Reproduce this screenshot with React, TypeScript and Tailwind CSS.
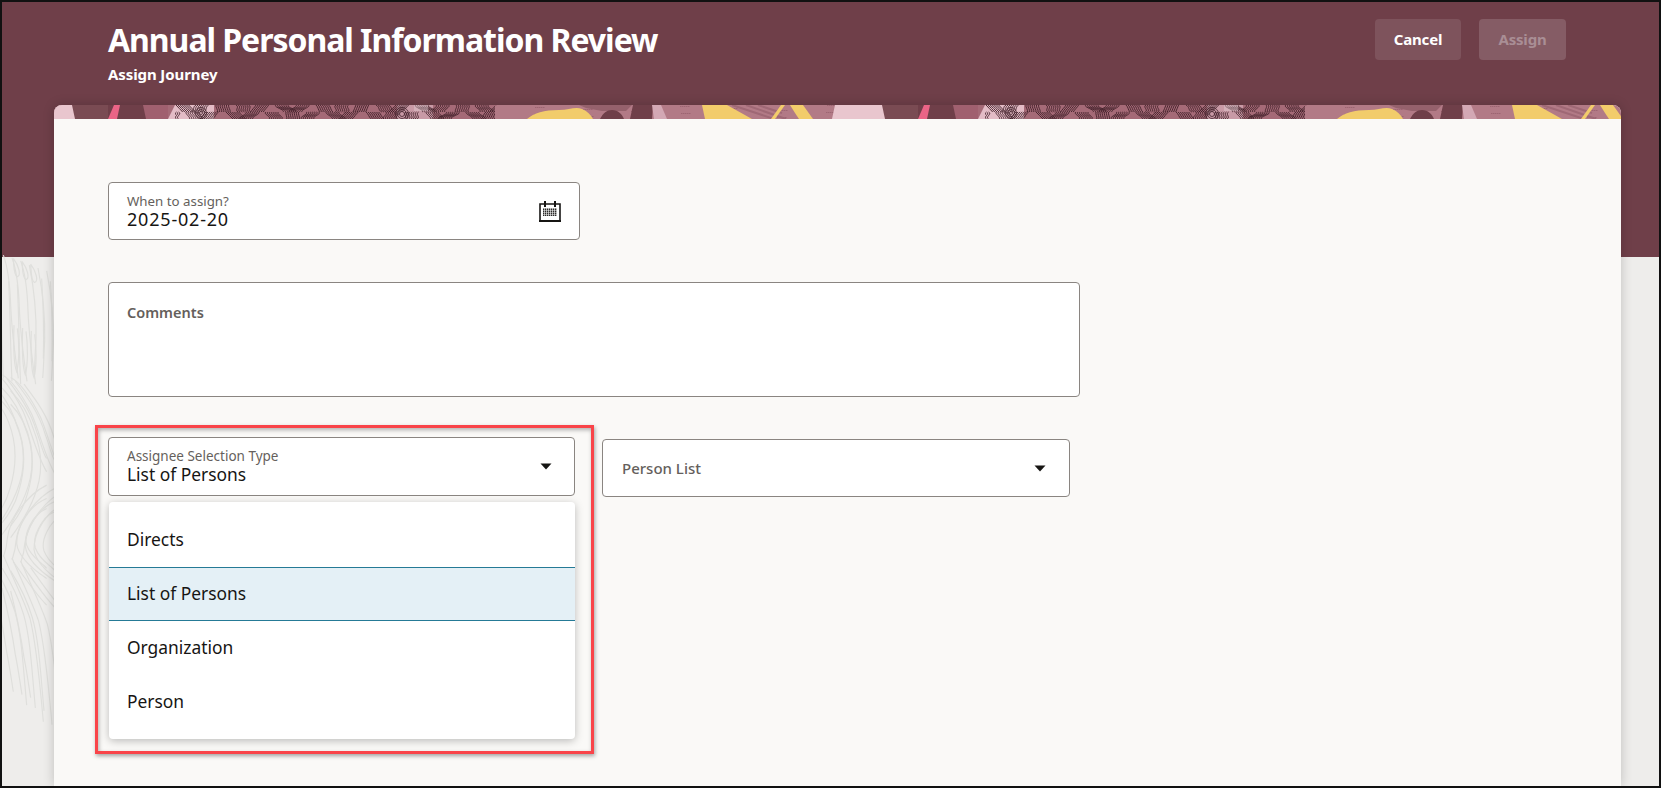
import React from 'react'

const HEADER = '#6f3f49'

/* fine dark lines for the fingerprint stretch of the banner: overlapping patches of wavy strokes */
const printLines: string[] = []
for (let p = 0; p < 34; p++) {
  const left = 112 + p * 10
  const slant = Math.sin(p * 1.3) * 7
  const bend = Math.cos(p * 0.9) * 4
  for (let i = 0; i < 7; i++) {
    const x = left + i * 2.1
    const top = p % 2 ? 0 : 7
    printLines.push(
      `M${x.toFixed(1)} ${top}C${(x + bend).toFixed(1)} ${top + 2} ${(x + slant - bend).toFixed(1)} ${top + 5} ${(x + slant).toFixed(1)} ${top + 7}`,
    )
  }
}

const specks = Array.from({ length: 70 }, (_, i) => ({
  x: 441 + ((i * 97) % 340),
  y: (i * 53) % 14,
}))

function BannerTile({ x }: { x: number }) {
  return (
    <g transform={`translate(${x} 0)`}>
      <rect x="0" y="0" width="810" height="14" fill="#b27a86" />
      <rect x="0" y="0" width="24" height="14" fill="#e9c6ce" />
      <polygon points="18,0 56,0 54,14 21,14" fill="#7a4b53" />
      <polygon points="54,0 92,0 92,14 54,14" fill={HEADER} />
      <polygon points="60,0 66,0 63,14 54,14" fill="#ea6486" />
      <polygon points="89,0 121,0 114,14 92,14" fill="#a0606f" />

      <rect x="114" y="0" width="327" height="14" fill="#a56a77" />
      <polygon points="121,0 160,0 160,14 114,14" fill="#e3bcc6" />
      <rect x="343" y="0" width="36" height="14" fill="#c99aa6" />
      <svg x="121" y="0" width="320" height="14">
        <g transform="translate(-121 0)">
          <path d={printLines.join('')} fill="none" stroke="#3f1f28" strokeWidth="0.9" />
        </g>
      </svg>
      {[5.5, 3.5, 1.5].map((r) => (
        <circle key={r} cx="147" cy="8" r={r} fill="none" stroke="#3f1f28" strokeWidth="0.8" />
      ))}
      {[6.5, 4.5, 2.5].map((r) => (
        <circle key={r} cx="348" cy="9" r={r} fill="none" stroke="#3f1f28" strokeWidth="0.8" />
      ))}
      <rect x="360" y="0" width="14" height="6" fill="#e6d3d8" opacity="0.4" />

      {specks.map((s, i) => (
        <rect key={i} x={s.x} y={s.y} width="1.5" height="1" fill="#9d6572" />
      ))}

      <polygon points="525,0 578,0 572,6 548,6 532,3" fill="#95616c" />
      <path d="M473 14C480 8 490 5 505 5C515 5 522 1 528 4C533 6 537 10 539 14Z" fill="#f2cc6b" />
      <path d="M546 14C549 8 553 5 558 5C564 5 568 9 570 14Z" fill={HEADER} />
      <polygon points="579,0 599,0 598,14 576,14" fill={HEADER} />
      <polygon points="598,0 607,0 613,14 600,14" fill="#d3a8b4" />
      <polygon points="648,0 673,0 698,14 651,14" fill="#f2cc6b" />
      <path d="M678 0L720 14M692 0L732 14M704 0L728 8" stroke="#9f6875" strokeWidth="2" />
      <polygon points="727,0 731,0 721,14 717,14" fill="#f2cc6b" />
      <polygon points="736,0 749,0 759,14 745,14 741,8" fill="#f2cc6b" />
      <polygon points="781,0 810,0 810,14 778,14" fill="#e9c6ce" />
    </g>
  )
}

const grainPaths = [
  'M30 30C45 70 50 120 52 180C55 260 65 330 75 400',
  'M60 40C75 60 85 90 72 95C60 90 62 60 60 40',
  'M62 240C60 300 62 360 70 380C78 350 78 290 72 250',
  'M108 60C120 120 130 200 128 280C125 330 125 360 122 390',
  'M20 100C25 200 25 300 30 400',
  'M145 100C150 180 152 260 150 340',
  'M0 420C30 450 55 490 70 540C90 590 95 640 85 690C70 760 30 820 0 860',
  'M0 460C30 490 50 530 60 580C70 630 65 680 50 730C40 770 20 800 0 825',
  'M0 380C30 395 65 450 90 500C115 560 130 630 160 680',
  'M40 400C70 440 110 490 130 560C145 600 150 630 160 640',
  'M160 790C115 810 90 870 100 900C115 940 145 950 160 970',
  'M160 760C110 780 70 840 70 895C75 940 130 980 160 1000',
  'M160 720C100 750 50 820 42 880C40 910 35 920 30 935',
  'M0 960C25 1000 50 1050 65 1100C85 1170 90 1270 100 1380',
  'M30 930C55 990 90 1060 110 1120C130 1200 140 1320 150 1430',
  'M0 1020C15 1080 30 1150 40 1220C50 1270 55 1310 60 1340',
  'M60 950C95 1000 130 1050 160 1080',
]

function WoodGrain() {
  return (
    <svg
      className="absolute left-0 bottom-0 pointer-events-none"
      width="60"
      height="538"
      viewBox="0 0 180 1614"
      fill="none"
      stroke="#dfdfdc"
      strokeWidth="3.5"
      aria-hidden="true"
    >
      {[0, 26, -26].map((dx) => (
        <g key={dx} transform={`translate(${dx} ${dx / 3})`}>
          {grainPaths.map((d) => (
            <path key={d} d={d} />
          ))}
        </g>
      ))}
    </svg>
  )
}

function Caret() {
  return (
    <svg width="12" height="7" viewBox="0 0 12 7" className="shrink-0" aria-hidden="true">
      <path d="M0.5 0.5H11.5L6 6.5Z" fill="#161513" />
    </svg>
  )
}

function CalendarIcon() {
  const dots = []
  for (let r = 0; r < 4; r++) {
    for (let c = 0; c < 7; c++) {
      dots.push(<rect key={`${r}-${c}`} x={4 + c * 2} y={7.5 + r * 2} width="1.4" height="1.4" fill="#161513" />)
    }
  }
  return (
    <svg width="22" height="21" viewBox="0 0 22 21" aria-hidden="true">
      <path d="M1 3H21V20H1Z" fill="none" stroke="#161513" strokeWidth="1.6" />
      <rect x="0" y="19" width="22" height="2" fill="#161513" />
      <rect x="5" y="0" width="2" height="6" fill="#161513" />
      <rect x="15" y="0" width="2" height="6" fill="#161513" />
      {dots}
    </svg>
  )
}

const fieldClass = 'bg-white border border-[#8a8581] rounded-[4px] flex items-center'

export default function App() {
  return (
    <div className="relative w-[1661px] h-[788px] overflow-hidden border-2 border-[#111111] bg-[#eeedeb] flex flex-col font-['Noto_Sans',sans-serif] text-[#161513]">
      <WoodGrain />

      <header className="h-[255px] shrink-0 bg-[#6f3f49] pl-[106px] pr-[93px] pt-[17px] flex justify-between items-start text-white">
        <div>
          <h1 className="text-[32px] leading-[42px] font-bold tracking-[-1.04px]">Annual Personal Information Review</h1>
          <p className="mt-[4px] text-[15px] leading-[18px] font-bold tracking-[-0.1px]">Assign Journey</p>
        </div>
        <div className="flex gap-[18px]">
          <button className="w-[86px] h-[41px] rounded-[4px] bg-[#7e535c] text-[15px] font-bold text-white tracking-[-0.2px]">Cancel</button>
          <button className="w-[87px] h-[41px] rounded-[4px] bg-[#855c65] text-[15px] font-bold text-[#a98e95] tracking-[-0.2px]">Assign</button>
        </div>
      </header>

      <main className="relative -mt-[152px] ml-[52px] mr-[38px] flex-1 bg-[#faf9f7] rounded-t-[8px] overflow-hidden shadow-[0_0_12px_rgba(0,0,0,0.2)]">
        <svg width="1567" height="14" className="block" aria-hidden="true">
          <BannerTile x={0} />
          <BannerTile x={810} />
        </svg>

        <div className="pl-[54px] pt-[63px]">
          <div className={`${fieldClass} w-[472px] h-[58px] justify-between pl-[18px] pr-[18px]`}>
            <div className="flex flex-col">
              <span className="text-[13.3px] leading-[15px] text-[#655f5c]">When to assign?</span>
              <span className="text-[18px] leading-[20px] tracking-[0.8px]">2025-02-20</span>
            </div>
            <CalendarIcon />
          </div>

          <div className="mt-[42px] w-[972px] h-[115px] bg-white border border-[#8a8581] rounded-[4px] pl-[18px] pt-[17px]">
            <span className="text-[14.5px] leading-[20px] font-semibold text-[#655f5c]">Comments</span>
          </div>

          <div className="relative mt-[40px] flex items-start">
            <div className={`${fieldClass} w-[467px] h-[59px] justify-between pl-[18px] pr-[22px]`}>
              <div className="flex flex-col">
                <span className="text-[13.5px] leading-[15px] text-[#655f5c]">Assignee Selection Type</span>
                <span className="text-[17.4px] leading-[20px]">List of Persons</span>
              </div>
              <Caret />
            </div>
            <div className={`${fieldClass} w-[468px] h-[58px] ml-[27px] mt-[2px] justify-between pl-[19px] pr-[23px]`}>
              <span className="text-[15px] font-medium text-[#655f5c]">Person List</span>
              <Caret />
            </div>

            {/* open dropdown */}
            <ul className="absolute left-[1px] top-[65px] w-[466px] h-[237px] bg-white rounded-[4px] pt-[11px] text-[17.4px] shadow-[0_2px_8px_rgba(0,0,0,0.25)]">
              <li className="h-[54px] flex items-center pl-[18px] pb-[2px]">Directs</li>
              <li className="h-[54px] flex items-center pl-[18px] pb-[2px] bg-[#e4f0f6] border-y border-[#257a96]">List of Persons</li>
              <li className="h-[54px] flex items-center pl-[18px] pb-[2px]">Organization</li>
              <li className="h-[54px] flex items-center pl-[18px] pb-[2px]">Person</li>
            </ul>

            {/* red annotation frame */}
            <div className="absolute -left-[13px] -top-[12px] w-[499px] h-[329px] border-[3px] border-[#f94449] shadow-[1px_2px_4px_rgba(0,0,0,0.35),inset_1px_2px_4px_rgba(0,0,0,0.3)] pointer-events-none" />
          </div>
        </div>
      </main>
    </div>
  )
}
